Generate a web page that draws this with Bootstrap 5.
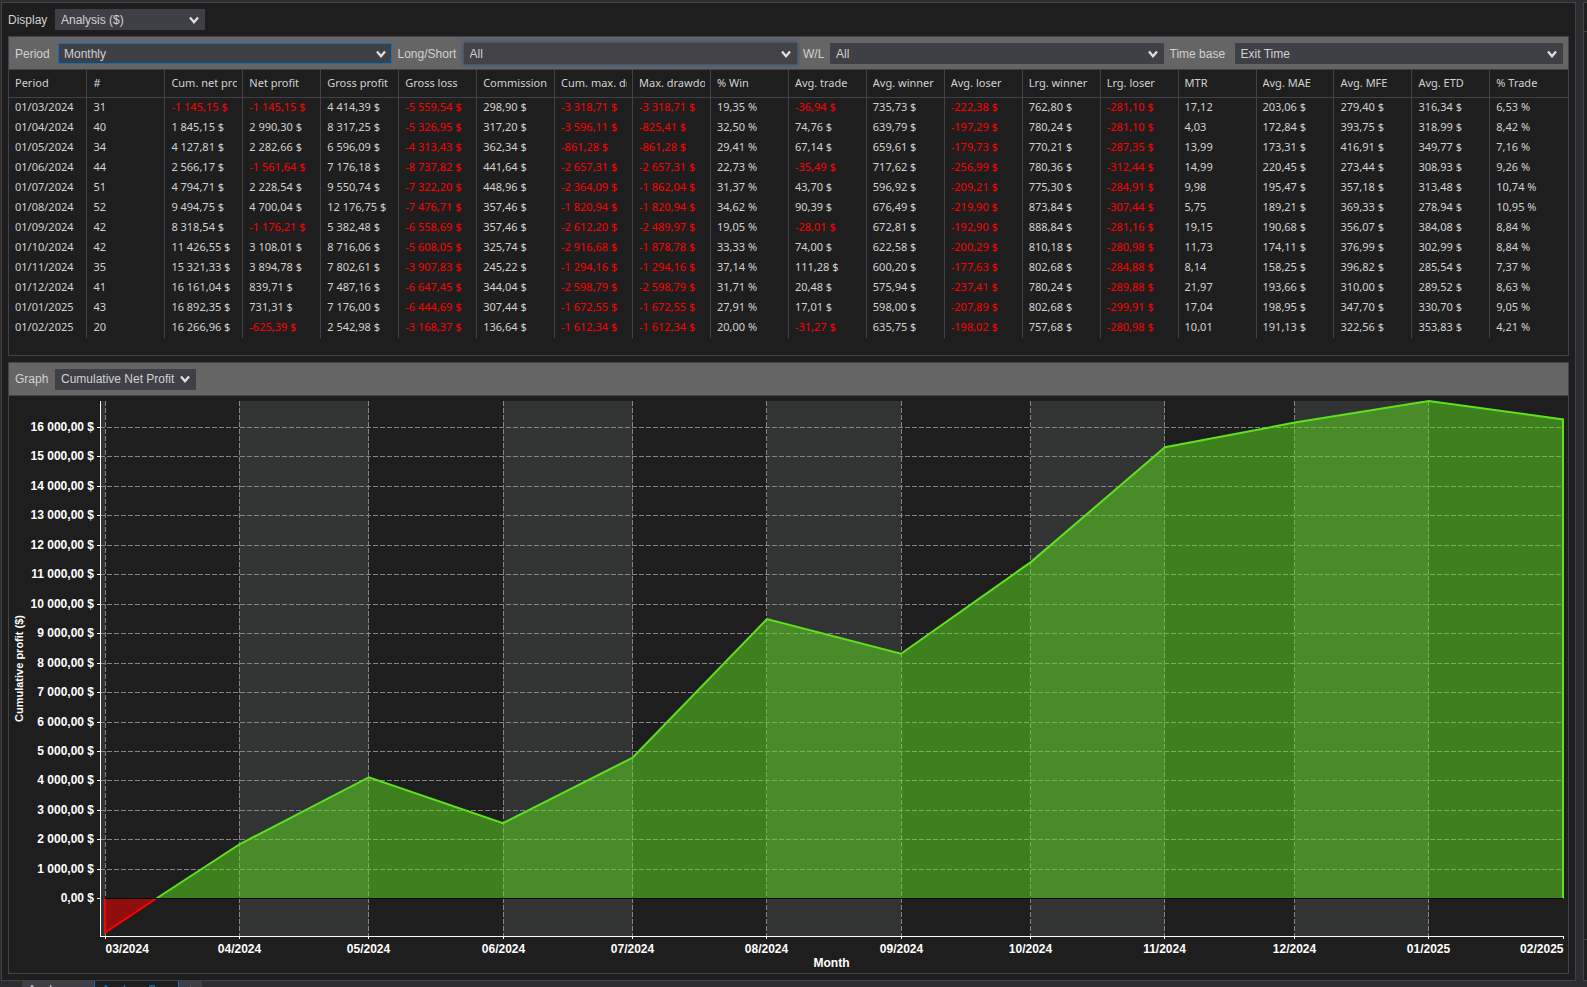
<!DOCTYPE html>
<html lang="en">
<head>
<meta charset="utf-8">
<meta name="viewport" content="width=device-width, initial-scale=1">
<title>Trade performance - Analysis</title>
<link href="https://cdn.jsdelivr.net/npm/bootstrap@5.3.0/dist/css/bootstrap.min.css" rel="stylesheet">
<style>
  :root { --edge: #434347; --surface: #1e1e1e; --control: #3f3f46; --ink: #d2d2d2; }
  body { background: #2d2d30; color: var(--ink); font: 12px/16px "Liberation Sans", Arial, sans-serif; }
  .shell { padding: 2px 0 0 1px; gap: 7px; min-height: 0; }
  .window-main { background: var(--surface); border: 1px solid var(--edge); padding: 6px; gap: 6px; min-width: 0; }
  .window-side { background: var(--surface); border: 1px solid var(--edge); border-right: 0; width: 4px; padding: 28px 0 40px; }
  .window-side div { border: solid var(--edge); border-width: 1px 0; }
  .toolbar-row { gap: 6px; }
  .panel { border: 1px solid var(--edge); }
  .panel-bar { background: #656565; border-bottom: 1px solid var(--edge); padding: 6px 5px 5px 6px; gap: 6px; }
  .filters { display: grid; grid-template-columns: 37px 66fr 60px 66fr 21px 66fr 59px 65fr; align-items: center; }
  .label-display { width: 41px; }
  .label-graph { width: 34px; }
  label { white-space: nowrap; }
  .pick.form-select {
    height: 21px; padding: 0 20px 0 6px; border: 0; border-radius: 0; color: var(--ink);
    font-size: 12px; line-height: 20px;
    background: var(--control) url("data:image/svg+xml,%3Csvg xmlns='http://www.w3.org/2000/svg' viewBox='0 0 10 8'%3E%3Cpath d='M1 1.5 5 6.2 9 1.5' fill='none' stroke='%23e0e0e0' stroke-width='2.3'/%3E%3C/svg%3E") no-repeat right 6px center / 10px 8px;
  }
  .pick.pick-active { box-shadow: inset 0 0 0 1px #0e70c0; }
  .pick.pick-glow { background-color: #434346; box-shadow: 0 0 3px 1px #34507f; }
  .pick-display { width: 150px !important; }
  .pick-graph { width: 141px !important; }
  .stats { table-layout: fixed; width: 100%; margin-bottom: 17px; font: 11px/18px "Noto Sans", "Open Sans", sans-serif; }
  .stats th, .stats td { padding: 0 5px 2px 6px; border-left: 1px solid var(--edge); overflow: hidden; white-space: nowrap; height: 20px; }
  .stats th:first-child, .stats td:first-child { border-left: 0; }
  .stats th { font-weight: 400; height: 27px; padding-bottom: 0; line-height: 24px; border-bottom: 1px solid var(--edge); }
  .stats th span { display: block; overflow: hidden; }
  .stats .loss { color: #f00; }
  .chart { min-height: 300px; }
  .chart text { fill: #fff; font: bold 12px "Liberation Sans", Arial, sans-serif; }
  .chart .axis-title { font-size: 11px; }
  .chart .grid { stroke: #858585; stroke-dasharray: 5 2; }
  .chart .axis { stroke: #fff; }
  .tab-strip { height: 6px; padding-left: 22px; }
  .sheet { height: 18px; border: 0; background: var(--control); color: var(--ink); line-height: 16px; padding: 1px 6px; width: 72px; text-align: left; flex: none; }
  .sheet-active { background: var(--surface); color: #0e80d0; border: solid #0e70c0; border-width: 0 1px; width: 85px; padding-left: 7px; }
  .sheet-add { width: 23px; text-align: center; }
</style>
</head>
<body class="vh-100 overflow-hidden d-flex flex-column">
<div class="shell d-flex flex-grow-1">
  <main class="window-main d-flex flex-column flex-grow-1">
    <div class="toolbar-row d-flex align-items-center">
      <label class="label-display" for="display">Display</label>
      <select id="display" class="pick pick-display form-select"><option>Analysis ($)</option></select>
    </div>
    <section class="panel">
      <div class="panel-bar filters">
        <label for="period">Period</label>
        <select id="period" class="pick pick-active form-select"><option>Monthly</option></select>
        <label for="side">Long/Short</label>
        <select id="side" class="pick pick-glow form-select"><option>All</option></select>
        <label for="wl">W/L</label>
        <select id="wl" class="pick form-select"><option>All</option></select>
        <label for="base">Time base</label>
        <select id="base" class="pick form-select"><option>Exit Time</option></select>
      </div>
      <table class="stats"><thead><tr id="heads"></tr></thead><tbody id="rows"></tbody></table>
    </section>
    <section class="panel d-flex flex-column flex-grow-1">
      <div class="panel-bar d-flex align-items-center">
        <label class="label-graph" for="graph">Graph</label>
        <select id="graph" class="pick pick-graph form-select"><option>Cumulative Net Profit</option></select>
      </div>
      <div class="chart flex-grow-1 position-relative"><svg id="plot" class="position-absolute top-0 start-0 w-100 h-100" role="img" aria-label="Cumulative profit by month"></svg></div>
    </section>
  </main>
  <aside class="window-side d-flex flex-column flex-shrink-0"><div class="flex-grow-1"></div></aside>
</div>
<nav class="tab-strip d-flex overflow-hidden">
  <button class="sheet" type="button">Analyse</button>
  <button class="sheet sheet-active" type="button">Analyse S</button>
  <button class="sheet sheet-add" type="button">+</button>
</nav>
<script>
const heads = ["Period","#","Cum. net profit","Net profit","Gross profit","Gross loss","Commission","Cum. max. drawdown","Max. drawdown","% Win","Avg. trade","Avg. winner","Avg. loser","Lrg. winner","Lrg. loser","MTR","Avg. MAE","Avg. MFE","Avg. ETD","% Trade"];
const units = ["","","$","$","$","$","$","$","$","%","$","$","$","$","$","","$","$","$","%"];
const data = `01/03/2024|31|-1 145,15|-1 145,15|4 414,39|-5 559,54|298,90|-3 318,71|-3 318,71|19,35|-36,94|735,73|-222,38|762,80|-281,10|17,12|203,06|279,40|316,34|6,53
01/04/2024|40|1 845,15|2 990,30|8 317,25|-5 326,95|317,20|-3 596,11|-825,41|32,50|74,76|639,79|-197,29|780,24|-281,10|4,03|172,84|393,75|318,99|8,42
01/05/2024|34|4 127,81|2 282,66|6 596,09|-4 313,43|362,34|-861,28|-861,28|29,41|67,14|659,61|-179,73|770,21|-287,35|13,99|173,31|416,91|349,77|7,16
01/06/2024|44|2 566,17|-1 561,64|7 176,18|-8 737,82|441,64|-2 657,31|-2 657,31|22,73|-35,49|717,62|-256,99|780,36|-312,44|14,99|220,45|273,44|308,93|9,26
01/07/2024|51|4 794,71|2 228,54|9 550,74|-7 322,20|448,96|-2 364,09|-1 862,04|31,37|43,70|596,92|-209,21|775,30|-284,91|9,98|195,47|357,18|313,48|10,74
01/08/2024|52|9 494,75|4 700,04|12 176,75|-7 476,71|357,46|-1 820,94|-1 820,94|34,62|90,39|676,49|-219,90|873,84|-307,44|5,75|189,21|369,33|278,94|10,95
01/09/2024|42|8 318,54|-1 176,21|5 382,48|-6 558,69|357,46|-2 612,20|-2 489,97|19,05|-28,01|672,81|-192,90|888,84|-281,16|19,15|190,68|356,07|384,08|8,84
01/10/2024|42|11 426,55|3 108,01|8 716,06|-5 608,05|325,74|-2 916,68|-1 878,78|33,33|74,00|622,58|-200,29|810,18|-280,98|11,73|174,11|376,99|302,99|8,84
01/11/2024|35|15 321,33|3 894,78|7 802,61|-3 907,83|245,22|-1 294,16|-1 294,16|37,14|111,28|600,20|-177,63|802,68|-284,88|8,14|158,25|396,82|285,54|7,37
01/12/2024|41|16 161,04|839,71|7 487,16|-6 647,45|344,04|-2 598,79|-2 598,79|31,71|20,48|575,94|-237,41|780,24|-289,88|21,97|193,66|310,00|289,52|8,63
01/01/2025|43|16 892,35|731,31|7 176,00|-6 444,69|307,44|-1 672,55|-1 672,55|27,91|17,01|598,00|-207,89|802,68|-299,91|17,04|198,95|347,70|330,70|9,05
01/02/2025|20|16 266,96|-625,39|2 542,98|-3 168,37|136,64|-1 612,34|-1 612,34|20,00|-31,27|635,75|-198,02|757,68|-280,98|10,01|191,13|322,56|353,83|4,21`.split("\n").map(r => r.split("|"));

document.getElementById("heads").innerHTML = heads.map(h => `<th scope="col"><span>${h}</span></th>`).join("");
document.getElementById("rows").innerHTML = data.map(r => "<tr>" + r.map((v, i) =>
  `<td${v[0] === "-" ? ' class="loss"' : ""}>${v}${units[i] ? " " + units[i] : ""}</td>`).join("") + "</tr>").join("");

const points = data.map(r => {
  const [d, m, y] = r[0].split("/");
  return { day: Date.UTC(+y, m - 1, +d) / 864e5, label: m + "/" + y, value: parseFloat(r[2].replace(" ", "").replace(",", ".")) };
});
const svg = document.getElementById("plot");

function draw() {
  const W = svg.clientWidth, H = svg.clientHeight;
  const axisX = 91, left = 96, right = W - 5, top = 5, bottom = H - 38;
  const max = Math.max(...points.map(p => p.value)), min = Math.min(...points.map(p => p.value)) * 1.1;
  const y = v => top + (max - v) / (max - min) * (bottom - top);
  const first = points[0].day, last = points[points.length - 1].day;
  const x = d => left + (d - first) / (last - first) * (right - left);
  const snap = n => Math.floor(n) + .5;
  const line = (cls, x1, y1, x2, y2) => `<line class="${cls}" x1="${x1}" y1="${y1}" x2="${x2}" y2="${y2}"/>`;
  let out = `<rect x="${axisX}" y="${top}" width="${left - axisX}" height="${bottom - top}" fill="#323433"/>`;
  for (let i = 1; i < points.length - 1; i += 2) {
    const a = Math.round(x(points[i].day)), b = Math.round(x(points[i + 1].day));
    out += `<rect x="${a}" y="${top}" width="${b - a}" height="${bottom - top}" fill="#323433"/>`;
  }
  for (let v = 0; v <= max; v += 1000) {
    const gy = snap(y(v));
    if (v) out += line("grid", axisX, gy, right, gy);
    out += line("axis", axisX - 3, gy, axisX, gy);
    const text = (v ? v / 1000 + " 000" : "0") + ",00 $";
    out += `<text x="${axisX - 6}" y="${gy + 3.5}" text-anchor="end">${text}</text>`;
  }
  points.forEach((p, i) => {
    const gx = snap(x(p.day)), end = i === points.length - 1;
    if (!end) out += line("grid", gx, top, gx, bottom);
    out += line("axis", gx, bottom, gx, bottom + 3);
    out += `<text x="${gx}" y="${bottom + 17}" text-anchor="${i === 0 ? "start" : end ? "end" : "middle"}">${p.label}</text>`;
  });
  const zero = snap(y(0));
  const [p0, p1] = points;
  const cross = x(p0.day + (p1.day - p0.day) * -p0.value / (p1.value - p0.value));
  const above = [[cross, zero], ...points.slice(1).map(p => [x(p.day), y(p.value)]), [right, zero]].map(c => c.join()).join(" ");
  const below = [[left, zero], [left, y(p0.value)], [cross, zero]].map(c => c.join()).join(" ");
  out += `<polygon points="${above}" fill="#5ee21e" fill-opacity=".5"/><polyline points="${above}" fill="none" stroke="#5ee21e" stroke-width="2"/>`;
  out += `<polygon points="${below}" fill="#f00" fill-opacity=".5"/><polyline points="${below}" fill="none" stroke="#f00" stroke-width="2"/>`;
  out += `<line x1="${left}" y1="${zero}" x2="${right}" y2="${zero}" stroke="#000"/>`;
  out += line("axis", axisX + .5, top, axisX + .5, bottom + 1) + line("axis", axisX, bottom + .5, right + 1, bottom + .5);
  out += `<text x="${(axisX + right) / 2}" y="${bottom + 31}" text-anchor="middle">Month</text>`;
  out += `<text class="axis-title" transform="translate(14 ${(top + bottom) / 2}) rotate(-90)" text-anchor="middle">Cumulative profit ($)</text>`;
  svg.innerHTML = out;
}
draw();
window.addEventListener("resize", draw);
</script>
<script src="https://cdn.jsdelivr.net/npm/bootstrap@5.3.0/dist/js/bootstrap.bundle.min.js"></script>
</body>
</html>
